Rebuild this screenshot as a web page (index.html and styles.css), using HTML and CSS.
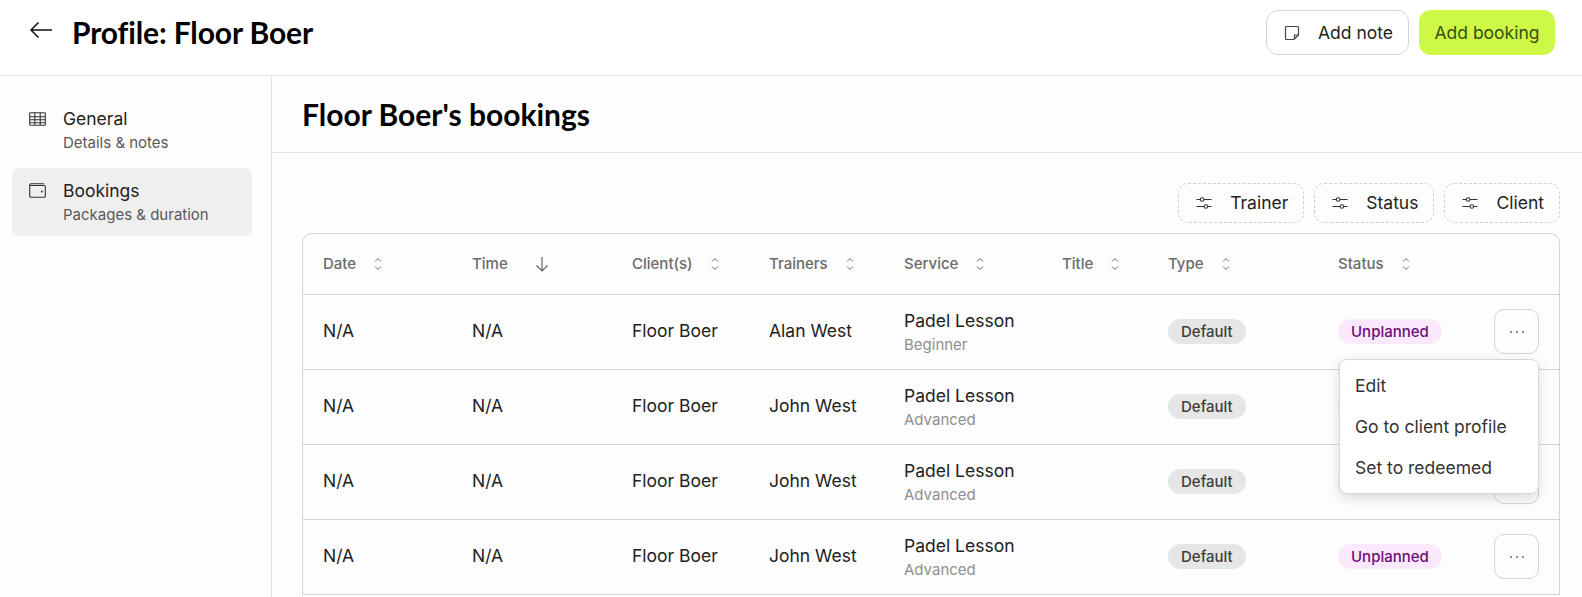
FILE: index.html
```html
<!DOCTYPE html>
<html lang="en">
<head>
<meta charset="utf-8">
<title>Profile: Floor Boer</title>
<link rel="stylesheet" href="styles.css">
</head>
<body>
<svg class="defs" width="0" height="0" aria-hidden="true">
  <symbol id="sort" viewBox="0 0 10 16"><path d="M2 5.500 5 2.500 8 5.500M2 10.500 5 13.500 8 10.500" fill="none" stroke="currentColor" stroke-width="1"/></symbol>
  <symbol id="sliders" viewBox="0 0 16 14"><path d="M.5 3.500H4.500M8 3.500H15.500M.5 10.500H8M11.500 10.500H15.500" fill="none" stroke="currentColor" stroke-width="1.100"/><circle cx="6.200" cy="3.500" r="1.800" fill="none" stroke="currentColor" stroke-width="1.100"/><circle cx="9.800" cy="10.500" r="1.800" fill="none" stroke="currentColor" stroke-width="1.100"/></symbol>
  <symbol id="dots" viewBox="0 0 16 4"><circle cx="2" cy="2" r=".9" fill="currentColor"/><circle cx="8" cy="2" r=".9" fill="currentColor"/><circle cx="14" cy="2" r=".9" fill="currentColor"/></symbol>
</svg>
<header class="topbar">
  <div class="topbar-left">
    <svg class="back" viewBox="0 0 24 18" width="24" height="18"><path d="M23 9H2M9.500 1.500 2 9l7.500 7.500" fill="none" stroke="currentColor" stroke-width="1.500"/></svg>
    <h1>Profile: Floor Boer</h1>
  </div>
  <div class="topbar-actions">
    <button class="btn btn-outline"><svg viewBox="0 0 16 16" width="16" height="16"><path d="M1.500 2.500a1 1 0 0 1 1-1h11a1 1 0 0 1 1 1V10l-4.500 4.500H2.500a1 1 0 0 1-1-1zM14.500 10H10.500v4.500" fill="none" stroke="#444" stroke-width="1.200"/></svg>Add note</button>
    <button class="btn btn-lime">Add booking</button>
  </div>
</header>
<div class="layout">
  <nav class="sidebar">
    <a class="nav-item">
      <svg class="icon-grid" viewBox="0 0 17 14" width="17" height="14"><path d="M.700 1.500a.8.800 0 0 1 .8-.8h14a.8.800 0 0 1 .8.800v11a.8.800 0 0 1-.8.800h-14a.8.800 0 0 1-.8-.8zM.700 4.700h15.600M.700 7.800h15.600M.700 10.800h15.600M5.800.7v12.600M11.200.7v12.600" fill="none" stroke="#333" stroke-width="1.100"/></svg>
      <span class="nav-text"><span class="nav-title">General</span><span class="nav-sub">Details &amp; notes</span></span>
    </a>
    <a class="nav-item active">
      <svg viewBox="0 0 17 15" width="17" height="15"><path d="M.700 3.500a1 1 0 0 1 1-1H15.300a1 1 0 0 1 1 1v9.800a1 1 0 0 1-1 1H1.700a1 1 0 0 1-1-1zM.700 3V2A1.300 1.300 0 0 1 2 .7H15.300" fill="none" stroke="#333" stroke-width="1.100"/><circle cx="12.800" cy="8.500" r=".9" fill="#333"/></svg>
      <span class="nav-text"><span class="nav-title">Bookings</span><span class="nav-sub">Packages &amp; duration</span></span>
    </a>
  </nav>
  <main class="content">
    <h2 class="section-title">Floor Boer's bookings</h2>
    <div class="section-body">
      <div class="filters">
        <button class="filter"><svg width="16" height="14"><use href="#sliders"/></svg>Trainer</button>
        <button class="filter"><svg width="16" height="14"><use href="#sliders"/></svg>Status</button>
        <button class="filter"><svg width="16" height="14"><use href="#sliders"/></svg>Client</button>
      </div>
      <div class="table-wrap">
        <table class="bookings">
          <colgroup>
            <col class="c-date"><col class="c-time"><col class="c-client"><col class="c-trainer"><col class="c-service"><col class="c-title"><col class="c-type"><col class="c-status"><col>
          </colgroup>
          <thead>
            <tr>
              <th><span class="th-label">Date</span><svg class="sort" width="10" height="16"><use href="#sort"/></svg></th>
              <th><span class="th-label">Time</span><svg class="arrow" width="14" height="16" viewBox="0 0 14 16"><path d="M7 1V15M1.500 9.500 7 15l5.500-5.500" fill="none" stroke="currentColor" stroke-width="1.200"/></svg></th>
              <th><span class="th-label">Client(s)</span><svg class="sort" width="10" height="16"><use href="#sort"/></svg></th>
              <th><span class="th-label">Trainers</span><svg class="sort" width="10" height="16"><use href="#sort"/></svg></th>
              <th><span class="th-label">Service</span><svg class="sort" width="10" height="16"><use href="#sort"/></svg></th>
              <th><span class="th-label">Title</span><svg class="sort" width="10" height="16"><use href="#sort"/></svg></th>
              <th><span class="th-label">Type</span><svg class="sort" width="10" height="16"><use href="#sort"/></svg></th>
              <th><span class="th-label">Status</span><svg class="sort" width="10" height="16"><use href="#sort"/></svg></th>
              <th></th>
            </tr>
          </thead>
          <tbody>
            <tr>
              <td><span class="cell">N/A</span></td><td><span class="cell">N/A</span></td><td><span class="cell">Floor Boer</span></td><td><span class="cell">Alan West</span></td>
              <td><span class="svc">Padel Lesson</span><span class="level">Beginner</span></td><td></td>
              <td><span class="pill pill-grey">Default</span></td>
              <td><span class="pill pill-pink">Unplanned</span></td>
              <td class="td-act">
                <div class="act-wrap">
                  <button class="more" aria-label="More"><svg width="16" height="4"><use href="#dots"/></svg></button>
                  <div class="menu">
                    <div class="menu-item">Edit</div>
                    <div class="menu-item">Go to client profile</div>
                    <div class="menu-item">Set to redeemed</div>
                  </div>
                </div>
              </td>
            </tr>
            <tr>
              <td><span class="cell">N/A</span></td><td><span class="cell">N/A</span></td><td><span class="cell">Floor Boer</span></td><td><span class="cell">John West</span></td>
              <td><span class="svc">Padel Lesson</span><span class="level">Advanced</span></td><td></td>
              <td><span class="pill pill-grey">Default</span></td>
              <td><span class="pill pill-pink">Unplanned</span></td>
              <td class="td-act"><button class="more" aria-label="More"><svg width="16" height="4"><use href="#dots"/></svg></button></td>
            </tr>
            <tr>
              <td><span class="cell">N/A</span></td><td><span class="cell">N/A</span></td><td><span class="cell">Floor Boer</span></td><td><span class="cell">John West</span></td>
              <td><span class="svc">Padel Lesson</span><span class="level">Advanced</span></td><td></td>
              <td><span class="pill pill-grey">Default</span></td>
              <td><span class="pill pill-pink">Unplanned</span></td>
              <td class="td-act"><button class="more" aria-label="More"><svg width="16" height="4"><use href="#dots"/></svg></button></td>
            </tr>
            <tr>
              <td><span class="cell">N/A</span></td><td><span class="cell">N/A</span></td><td><span class="cell">Floor Boer</span></td><td><span class="cell">John West</span></td>
              <td><span class="svc">Padel Lesson</span><span class="level">Advanced</span></td><td></td>
              <td><span class="pill pill-grey">Default</span></td>
              <td><span class="pill pill-pink">Unplanned</span></td>
              <td class="td-act"><button class="more" aria-label="More"><svg width="16" height="4"><use href="#dots"/></svg></button></td>
            </tr>
          </tbody>
        </table>
      </div>
    </div>
  </main>
</div>
</body>
</html>
```

FILE: styles.css
```css
* { box-sizing: border-box; }
html, body { height: 100%; }
body {
  margin: 0;
  overflow: hidden;
  background: #fdfdfd;
  color: #1f1f1f;
  font-family: Inter, "Liberation Sans", sans-serif;
  font-size: 17.5px;
}
.defs { display: block; height: 0; }
button { font-family: inherit; cursor: pointer; }
h1, h2 { margin: 0; font-family: Lato, Inter, sans-serif; font-weight: 700; color: #000; }

.topbar {
  height: 76px;
  display: flex;
  align-items: flex-start;
  justify-content: space-between;
  padding: 10px 27px 0 29px;
  border-bottom: 1px solid #e5e5e5;
  background: #fff;
}
.topbar-left { display: flex; align-items: center; gap: 19px; height: 44px; }
.back { color: #111; margin-top: -4px; }
h1 { font-size: 30px; line-height: 44px; letter-spacing: -.12px; }
.topbar-actions { display: flex; gap: 10px; }
.btn {
  height: 45px;
  border-radius: 12px;
  font-size: 17.5px;
  color: #222;
  display: flex;
  align-items: center;
  font-weight: 400;
}
.btn-outline {
  width: 143px;
  padding: 0 0 0 17px;
  gap: 18px;
  background: #fff;
  border: 1px solid #d4d4d4;
}
.btn-lime {
  width: 136px;
  justify-content: center;
  background: #cdf845;
  border: 0;
  color: #3b4d12;
}

.layout { display: flex; height: 521px; }
.sidebar {
  width: 272px;
  flex: none;
  padding: 20px 19px 0 12px;
  border-right: 1px solid #e5e5e5;
  display: flex;
  flex-direction: column;
  gap: 4px;
}
.nav-item {
  height: 68px;
  display: flex;
  padding: 11px 0 0 17px;
  gap: 17px;
  border-radius: 8px;
}
.nav-item svg { margin-top: 4px; flex: none; }
.nav-item .icon-grid { margin-top: 5px; }
.nav-item.active { background: #efefef; }
.nav-text { display: flex; flex-direction: column; }
.nav-title { font-size: 17.5px; line-height: 24px; color: #222; font-weight: 400; }
.nav-sub { font-size: 15px; line-height: 24px; color: #595959; }

.content { flex: 1; min-width: 0; }
.section-title {
  height: 77px;
  padding: 0 30px;
  font-size: 30px;
  line-height: 77px;
  border-bottom: 1px solid #e5e5e5;
}
.section-body { padding: 30px 22px 0 30px; }
.filters { display: flex; justify-content: flex-end; gap: 10px; margin-bottom: 10px; }
.filter {
  height: 40px;
  display: flex;
  align-items: center;
  gap: 18px;
  padding: 0 15px 2px 17px;
  background: transparent;
  border: 1px dashed #d0d0d0;
  border-radius: 10px;
  font-size: 17.5px;
  font-weight: 400;
  color: #222;
}
.filter svg { color: #333; margin-top: 2px; }

.table-wrap {
  border: 1px solid #d4d4d4;
  border-bottom: 0;
  border-radius: 10px 10px 0 0;
}
.bookings { width: 100%; border-collapse: collapse; table-layout: fixed; }
.c-date { width: 149px; }
.c-time { width: 160px; }
.c-client { width: 137px; }
.c-trainer { width: 135px; }
.c-service { width: 158px; }
.c-title { width: 106px; }
.c-type { width: 170px; }
.c-status { width: 145px; }
.bookings th {
  height: 60px;
  padding: 0 0 0 20px;
  text-align: left;
  font-size: 15px;
  font-weight: 500;
  color: #6b6b6b;
  border-bottom: 1px solid #d4d4d4;
  white-space: nowrap;
}
.bookings th svg { vertical-align: middle; }
.th-label { display: inline-block; margin: 0 17px 1px 0; vertical-align: middle; }
.arrow { color: #666; margin-left: 10px; }
.sort { color: #666; }
.bookings td {
  height: 75px;
  padding: 0 0 0 20px;
  font-size: 17.5px;
  color: #222;
  border-bottom: 1px solid #d4d4d4;
  white-space: nowrap;
}
.cell { display: block; margin-top: -3px; }
.svc { display: block; line-height: 24px; margin-top: 2px; }
.level { display: block; font-size: 15px; line-height: 22px; margin-top: 1px; color: #8f8f8f; }
.pill {
  display: inline-block;
  height: 25px;
  line-height: 25px;
  padding: 0 13px;
  border-radius: 13px;
  font-size: 15px;
  font-weight: 500;
  vertical-align: middle;
}
.pill-grey { background: #e6e6e6; color: #3d3d3d; }
.pill-pink { background: #fce8fc; color: #6a0d78; }
.bookings .td-act { padding: 0 20px 0 0; text-align: right; }
.act-wrap { position: relative; display: inline-block; vertical-align: middle; }
.more {
  display: flex;
  align-items: center;
  justify-content: center;
  margin-left: auto;
  width: 45px;
  height: 45px;
  border-radius: 10px;
  background: transparent;
  border: 1px solid #d4d4d4;
  color: #555;
  padding: 0;
}
.menu {
  position: absolute;
  z-index: 2;
  top: 50px;
  right: 0;
  width: 200px;
  height: 135px;
  padding: 5px 0;
  text-align: left;
  background: #fff;
  border: 1px solid #d8d8d8;
  border-radius: 8px;
  box-shadow: 0 4px 12px rgba(0, 0, 0, .14);
}
.menu-item { height: 41px; line-height: 41px; padding-left: 15px; font-size: 17.5px; color: #333; }
```
